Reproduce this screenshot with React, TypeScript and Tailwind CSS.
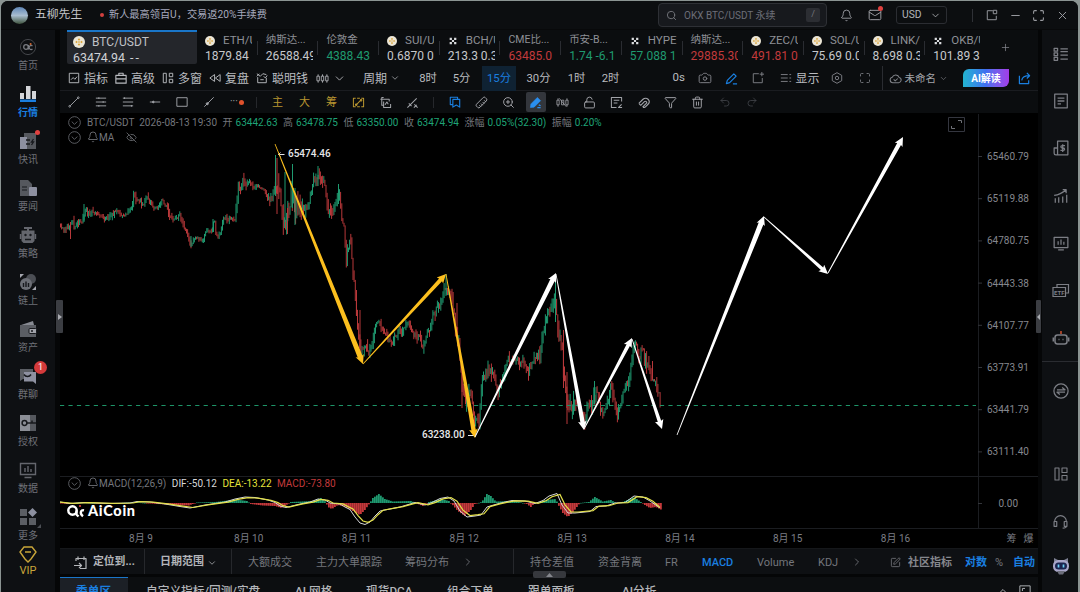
import type { ReactNode } from 'react';
import {
  Bell,
  Camera,
  ChevronDown,
  ChevronRight,
  ChevronUp,
  EyeOff,
  Filter,
  LockOpen,
  Mail,
  Maximize,
  Minus,
  Plus,
  Redo2,
  Ruler,
  Search,
  SquarePen,
  Trash2,
  Undo2,
  X,
  ZoomIn,
} from 'lucide-react';
import { clsx } from 'clsx';

const GREEN = '#1f9a70';
const RED = '#b8383a';

/* ---------- icon helper ---------- */

function Ico({ size = 13, w = 1.1, children, className }: { size?: number; w?: number; children: ReactNode; className?: string }) {
  return (
    <svg
      width={size}
      height={size}
      viewBox="0 0 14 14"
      fill="none"
      stroke="currentColor"
      strokeWidth={w}
      strokeLinejoin="round"
      className={clsx('shrink-0', className)}
    >
      {children}
    </svg>
  );
}

/* ---------- title bar ---------- */

function TitleBar() {
  return (
    <header className="flex h-[28px] shrink-0 items-center bg-[#0c0e10] pl-[10px] text-[#9a9ca1]">
      <div className="h-[17px] w-[17px] rounded-full bg-gradient-to-b from-[#5f86b5] via-[#a9bdd0] to-[#41553f]" />
      <span className="ml-[7px] w-[65px] text-[11.800px] text-[#c3c5c9]">五柳先生</span>
      <span className="h-[4px] w-[4px] rounded-full bg-[#d2403f]" />
      <span className="ml-[5px] w-[549px] text-[10.200px] text-[#a6a9bd]">新人最高领百U，交易返20%手续费</span>
      <div className="flex h-[24px] w-[169px] shrink-0 items-center rounded-[4px] border border-[#2e3035] bg-[#17191d] pl-[7px] pr-[6px]">
        <Search size={11} strokeWidth={2} className="text-[#77797f]" />
        <span className="ml-[7px] flex-1 pt-px text-[10px] text-[#6c6e78]">OKX BTC/USDT 永续</span>
        <span className="flex h-[14px] w-[14px] items-center justify-center rounded-[2px] bg-[#2c2e33] text-[9px] text-[#74767c]">/</span>
      </div>
      <Bell size={13} strokeWidth={1.7} className="ml-[13px] shrink-0" />
      <div className="relative ml-[15px] shrink-0">
        <Mail size={14} strokeWidth={1.7} />
        <span className="absolute -right-px -top-[2px] h-[5px] w-[5px] rounded-full bg-[#e0413f]" />
      </div>
      <div className="ml-[14px] flex h-[18px] w-[51px] shrink-0 items-center justify-between rounded-[3px] border border-[#2b2d32] px-[5px] text-[10.300px] text-[#b4b6ba]">
        USD
        <ChevronDown size={11} strokeWidth={1.8} />
      </div>
      <span className="ml-[25px] h-[13px] w-px bg-[#2f3136]" />
      <Ico size={12} className="ml-[13px]">
        <path d="M8 2H1.500v10.500H12V8M8.500 1.500h4v4h-4z" />
      </Ico>
      <Minus size={13} strokeWidth={1.8} className="ml-[11px]" />
      <Maximize size={13} strokeWidth={2} className="ml-[10px]" />
      <X size={13} strokeWidth={1.8} className="ml-[11px]" />
    </header>
  );
}

/* ---------- left navigation ---------- */

const navItems: { label: string; icon: ReactNode; dot?: boolean; badge?: string; active?: boolean; corner?: boolean }[] = [
  {
    label: '首页',
    icon: (
      <>
        <circle cx="9" cy="9" r="7.600" fill="none" stroke="#44464b" />
        <circle cx="7" cy="9" r="2.300" fill="none" stroke="#7a7c82" strokeWidth="1.300" />
        <path d="M9.500 7v4.500M13.500 8a2 2 0 1 0 0 3" fill="none" stroke="#7a7c82" strokeWidth="1.200" />
        <circle cx="11.600" cy="6" r="1" fill="#d2662f" />
      </>
    ),
  },
  {
    label: '行情',
    active: true,
    icon: (
      <>
        <path d="M1 8h4v6H1zM7 1h4.500v13H7zM13 6h4v8h-4z" fill="#d4d6da" />
        <path d="M1 14.500h16V17H1z" fill="#1a7fe0" />
      </>
    ),
  },
  {
    label: '快讯',
    dot: true,
    icon: (
      <>
        <path d="M5 1h12v16H5z" fill="#55585e" />
        <path d="M1 5h7v12H1z" fill="#8d90a0" />
        <path d="M7 8h4M7 12h4M14.500 7l-2 3h2l-2 3" stroke="#17191d" strokeWidth="1.300" fill="none" />
      </>
    ),
  },
  {
    label: '要闻',
    icon: (
      <>
        <path d="M1 1h8l4 4v12H1z" fill="#55585e" />
        <path d="M3 8h5M3 11h5" stroke="#17191d" strokeWidth="1.200" />
        <rect x="10" y="8" width="8" height="9" rx="1" fill="#8d90a0" />
      </>
    ),
  },
  {
    label: '策略',
    icon: (
      <>
        <path d="M5 1h8v2h-3v1.500h5.500v10.500l-2 2h-9l-2-2V4.500H8V3H5zM.8 8h1.400v5H.8zM15.800 8h1.400v5h-1.400z" fill="#64666d" />
        <circle cx="6.500" cy="9" r="1.200" fill="#17191d" />
        <circle cx="11.500" cy="9" r="1.200" fill="#17191d" />
        <path d="M6 13.500h6" stroke="#17191d" strokeWidth="1.300" />
      </>
    ),
  },
  {
    label: '链上',
    icon: (
      <>
        <circle cx="12" cy="6" r="5" fill="#4b4e54" />
        <circle cx="7" cy="11" r="6" fill="#6c6f76" />
        <path d="M1 1h4L1 5zM17 17h-4l4-4z" fill="#a4a6ae" />
        <path d="M4.500 10v4M7 8.500v5.500M9.500 10v4" stroke="#17191d" strokeWidth="1.400" />
      </>
    ),
  },
  {
    label: '资产',
    icon: (
      <>
        <path d="M2 5l12-4 1 4z" fill="#878a92" />
        <path d="M1 5h16v12H1z" fill="#5b5e64" />
        <rect x="10" y="8.500" width="7.500" height="5" rx="1" fill="#a1a3aa" stroke="#17191d" />
        <path d="M12 11h2" stroke="#17191d" strokeWidth="1.300" />
      </>
    ),
  },
  {
    label: '群聊',
    badge: '1',
    icon: (
      <>
        <path d="M1 2h13v10H4l-3 2z" fill="#5b5e64" />
        <path d="M5 5h12v12l-3-2.500H5z" fill="#8d90a0" />
        <path d="M5 7.500c1.500 2.500 5.500 2.500 7 0" stroke="#17191d" strokeWidth="1.500" fill="none" />
      </>
    ),
  },
  {
    label: '授权',
    icon: (
      <>
        <path d="M1 1h10v16H1z" fill="#8b8e96" />
        <path d="M11 1h6v16h-6z" fill="#55585e" />
        <circle cx="5.500" cy="9" r="2.400" fill="none" stroke="#17191d" strokeWidth="1.500" />
        <path d="M8 9h9M13 6.500V9" stroke="#17191d" strokeWidth="1.500" />
      </>
    ),
  },
  {
    label: '数据',
    icon: (
      <path d="M1.500 2.500h15v11h-15zM5.500 16.500h7M6 7v4M9 5v6M12 8v3" fill="none" stroke="#64666d" strokeWidth="1.400" />
    ),
  },
  {
    label: '更多',
    corner: true,
    icon: (
      <>
        <path d="M1 1h7v7H1zM1 10h7v7H1zM10 10h7v7h-7z" fill="#5b5e64" />
        <path d="M13.500 0l4.500 4.500L13.500 9 9 4.500z" fill="#8d90a0" />
      </>
    ),
  },
];

function LeftNav() {
  return (
    <nav className="flex w-[54px] shrink-0 flex-col items-center bg-[#0e1013] pt-[8px]">
      {navItems.map((item) => (
        <div key={item.label} className="flex h-[47px] shrink-0 flex-col items-center">
          <div className="relative">
            <svg width="18" height="18" viewBox="0 0 18 18">
              {item.icon}
            </svg>
            {item.dot && <span className="absolute -right-[3px] -top-[2px] h-[5px] w-[5px] rounded-full bg-[#e0413f]" />}
            {item.badge && (
              <span className="absolute -right-[10px] -top-[6px] flex h-[13px] w-[13px] items-center justify-center rounded-full bg-[#d43a3b] text-[9px] text-white">
                {item.badge}
              </span>
            )}
            {item.corner && (
              <svg width="4" height="4" viewBox="0 0 4 4" className="absolute -bottom-[2px] -right-[4px]">
                <path d="M4 0v4H0z" fill="#4b4e54" />
              </svg>
            )}
          </div>
          <span
            className={clsx(
              'mt-[2px] text-[10px] leading-[15px]',
              item.active ? 'font-bold text-[#1a7fe0]' : 'text-[#6f7178]',
            )}
          >
            {item.label}
          </span>
        </div>
      ))}
      <svg width="18" height="17" viewBox="0 0 18 17" fill="none" stroke="#c9a63a" strokeWidth="1.400" className="-mt-[9px] shrink-0">
        <path d="M5 1h8l4 5-5 7-3 3-3-3-5-7zM6 6h6" />
      </svg>
      <span className="text-[11px] leading-[16px] text-[#c9a63a]">VIP</span>
    </nav>
  );
}

/* ---------- quote tabs ---------- */

type Quote = { name: string; value: string; ex?: 'bn' | 'okx'; tone?: 'up' | 'down' };

const quotes: Quote[] = [
  { name: 'ETH/USDT', value: '1879.84', ex: 'bn' },
  { name: '纳斯达...', value: '26588.49' },
  { name: '伦敦金', value: '4388.43', tone: 'up' },
  { name: 'SUI/USDT', value: '0.6870 0.1', ex: 'bn' },
  { name: 'BCH/USDT', value: '213.3 0.33', ex: 'okx' },
  { name: 'CME比...', value: '63485.0', tone: 'down' },
  { name: '币安-B...', value: '1.74 -6.1', tone: 'up' },
  { name: 'HYPE', value: '57.088 1', ex: 'okx', tone: 'up' },
  { name: '纳斯达...', value: '29885.30', tone: 'down' },
  { name: 'ZEC/USDT', value: '491.81 0.2', ex: 'bn', tone: 'down' },
  { name: 'SOL/USDT', value: '75.69 0.05', ex: 'bn' },
  { name: 'LINK/USDT', value: '8.698 0.35', ex: 'bn' },
  { name: 'OKB/USDT', value: '101.89 3.1', ex: 'okx' },
];

function ExchangeLogo({ ex, size }: { ex: 'bn' | 'okx'; size: number }) {
  if (ex === 'bn') {
    return (
      <svg width={size} height={size} viewBox="0 0 12 12" className="shrink-0">
        <circle cx="6" cy="6" r="6" fill="#ece6d6" />
        <path d="M6 2.200l1.300 1.300L6 4.800 4.700 3.500zM6 7.200l1.300 1.300L6 9.800 4.700 8.500zM3.500 4.700L4.800 6 3.500 7.300 2.200 6zM8.500 4.700L9.800 6 8.500 7.300 7.200 6zM6 5l1 1-1 1-1-1z" fill="#dba43a" />
      </svg>
    );
  }
  return (
    <svg width={size} height={size} viewBox="0 0 12 12" className="shrink-0">
      <path d="M2 2h2.700v2.700H2zM7.300 2H10v2.700H7.300zM4.700 4.700h2.600v2.600H4.700zM2 7.300h2.700V10H2zM7.300 7.300H10V10H7.300z" fill="#d9dbde" />
    </svg>
  );
}

function QuoteTabs() {
  return (
    <div className="flex h-[35px] shrink-0 bg-[#0b0d0f] pl-[7px]">
      <div className="h-[34px] w-[130px] shrink-0 rounded-b-[2px] border-t-2 border-[#1a76c9] bg-[#24262b] pl-[6px]">
        <div className="flex h-[19px] items-center gap-[7px] text-[12px] text-[#c0c2c6]">
          <ExchangeLogo ex="bn" size={12} />
          BTC/USDT
        </div>
        <div className="flex gap-[5px] text-[12.400px] leading-[14px] text-[#d0d2d6]">
          63474.94<span className="tracking-[2px]">--</span>
        </div>
      </div>
      {quotes.map((q, i) => (
        <div key={i} className="flex w-[60.700px] shrink-0 items-center pt-px">
          <div className="w-[55px] shrink-0 overflow-hidden whitespace-nowrap pl-[8px]">
            <div className={clsx('flex h-[17px] items-center text-[#8e9096]', q.ex ? 'gap-[8px] pt-[3px] text-[11.500px]' : 'text-[10.500px]')}>
              {q.ex && <ExchangeLogo ex={q.ex} size={10} />}
              {q.name}
            </div>
            <div
              className={clsx(
                'text-[12px] leading-[17px]',
                q.tone === 'up' && 'text-[#1f9a70]',
                q.tone === 'down' && 'text-[#c23a3c]',
                !q.tone && 'text-[#c6c8cc]',
              )}
            >
              {q.value}
            </div>
          </div>
          {i < quotes.length - 1 && <span className="ml-auto h-[14px] w-px bg-[#2a2c31]" />}
        </div>
      ))}
      <Plus size={11} strokeWidth={1.6} className="ml-[14px] mt-[12px] text-[#85878d]" />
    </div>
  );
}

/* ---------- toolbars ---------- */

function Tool({ icon, label, className }: { icon: ReactNode; label: string; className?: string }) {
  return (
    <div className={clsx('flex shrink-0 items-center gap-[4px] whitespace-nowrap', className)}>
      {icon}
      <span className="pt-px">{label}</span>
    </div>
  );
}

function ChartToolbar() {
  return (
    <div className="flex h-[26px] shrink-0 items-center border-b border-[#1a1c20] bg-[#0b0d0f] pl-[8px] pt-px text-[12px] text-[#b9bbbf]">
      <Tool
        className="w-[47px]"
        label="指标"
        icon={<Ico size={12}><path d="M1.500 1.500h11v11h-11zM3.500 9l2.500-2.500L8 8.500l2.500-3" /></Ico>}
      />
      <Tool
        className="w-[47px]"
        label="高级"
        icon={<Ico size={12} w={1.3}><path d="M1 4h12v9H1zM4.500 4V1.500h5V4M1 8h12" /></Ico>}
      />
      <Tool
        className="w-[47px]"
        label="多窗"
        icon={<Ico size={12}><path d="M1.500 1.500h3.500v11H1.500zM8.500 1.500h4v4h-4zM8.500 8.500h4v4h-4z" /></Ico>}
      />
      <Tool
        className="w-[47px]"
        label="复盘"
        icon={<Ico size={12}><path d="M6.500 3v8L1 7zM13 3v8L7.500 7z" /></Ico>}
      />
      <Tool
        className="w-[60px]"
        label="聪明钱"
        icon={<Ico size={12}><path d="M1 2l4 3 3-3 4 1M2 6v6.500h10V7M5 9h4M1 5l3-3M9 5l2 2 2-3" /></Ico>}
      />
      <Ico size={13} w={0.9}>
        <path d="M1 4.500h2.600v5H1zM5.700 4.500h2.600v5H5.700zM10.400 4.500H13v5h-2.600z" />
        <path d="M2.300 2.500v2M2.300 9.500v2M7 2.500v2M7 9.500v2M11.700 2.500v2M11.700 9.500v2" />
      </Ico>
      <ChevronDown size={13} strokeWidth={1.6} className="ml-[4px]" />
      <div className="ml-[17px] flex w-[48px] items-center gap-[3px]">
        <span className="pt-px">周期</span>
        <ChevronDown size={10} strokeWidth={1.7} />
      </div>
      <div className="flex h-full items-center text-center text-[11.300px]">
        <span className="w-[34px] pt-[3px]">8时</span>
        <span className="mr-[4px] w-[33px] pt-[3px]">5分</span>
        <span className="flex h-[25px] w-[34px] items-center justify-center bg-[#0f2233] pt-[2px] text-[#1a7fe0]">15分</span>
        <span className="w-[45px] pt-[3px]">30分</span>
        <span className="w-[31px] pt-[3px]">1时</span>
        <span className="w-[37px] pt-[3px]">2时</span>
      </div>
      <div className="ml-auto flex h-full items-center text-[#7e8086]">
        <span className="w-[25px] text-[11.500px] text-[#b9bbbf]">0s</span>
        <Camera size={14} strokeWidth={1.7} className="mr-[13px]" />
        <Ico size={13} w={1.3} className="mr-[14px] text-[#1a7fe0]">
          <path d="M1.500 12.500l1-3.500 7-7 2.500 2.500-7 7zM8.500 12.800H13" />
        </Ico>
        <Ico size={12} className="mr-[16px]">
          <path d="M8 2H1.500v10.500H12V7M11.500 0v5M9 2.500h5" />
        </Ico>
        <Ico size={12} className="mr-[4px]">
          <path d="M1 3h8M1 7h8M1 11h8M11 3h2M11 7h2M11 11h2" />
        </Ico>
        <span className="w-[35px] pt-px text-[12px] text-[#b9bbbf]">显示</span>
        <Ico size={12} className="mr-[16px]">
          <path d="M7 .8l5.500 3.100v6.200L7 13.200l-5.500-3.100V3.900z" />
          <circle cx="7" cy="7" r="2" />
        </Ico>
        <Maximize size={12} strokeWidth={1.7} className="mr-[11px]" />
        <span className="h-full w-px bg-[#2a2c31]" />
        <Ico size={13} w={1.1} className="ml-[6px] mr-[3px]">
          <path d="M4 11.500a3 3 0 0 1-.5-5.900 4 4 0 0 1 7.500.4 2.800 2.800 0 0 1-.5 5.500zM5 8l1.700 1.600L9.500 7" />
        </Ico>
        <span className="pt-px text-[10.500px] text-[#a3a5aa]">未命名</span>
        <ChevronDown size={9} strokeWidth={1.7} className="ml-[3px] mr-[15px]" />
        <span className="flex h-[18px] w-[46px] items-center justify-center rounded-br-[6px] rounded-tl-[6px] bg-gradient-to-r from-[#22b3cf] via-[#3f6ef0] to-[#a23be8] text-[10px] font-bold text-white">
          AI解读
        </span>
        <Ico size={13} w={1.3} className="ml-[9px] mr-[7px] text-[#1a7fe0]">
          <path d="M1.500 4v8.500h10V9M4 9c.5-3.500 3-5 8.500-5M9.500 1l3 3-3 3" />
        </Ico>
      </div>
    </div>
  );
}

function Cell({ children, active }: { children: ReactNode; active?: boolean }) {
  return (
    <div className="flex w-[27px] shrink-0 items-center justify-center">
      <div className={clsx('flex h-[20px] w-[20px] items-center justify-center rounded-[2px]', active && 'bg-[#33363c] text-[#2a8ff0]')}>
        {children}
      </div>
    </div>
  );
}

function DrawToolbar() {
  return (
    <div className="flex h-[22px] shrink-0 items-center bg-[#0b0d0f] text-[11px] text-[#a2a4a9]">
      <Cell><Ico size={12}><path d="M2.500 11.500l9-9" /><circle cx="2" cy="12" r="1" /><circle cx="12" cy="2" r="1" /></Ico></Cell>
      <Cell><Ico size={12}><path d="M1 2.500h12M1 7h12M1 11.500h12M4.500 1.500v2M9.500 6v2M4.500 10.500v2" /></Ico></Cell>
      <Cell><Ico size={12}><path d="M1 2.500h12M1 7h12M1 11.500h12M3 1.500v2M11 10.500v2" /></Ico></Cell>
      <Cell><Ico size={12}><path d="M1 7h12" /><circle cx="5" cy="7" r="1" fill="currentColor" /></Ico></Cell>
      <Cell><Ico size={12}><path d="M1 2h12v10H1z" /></Ico></Cell>
      <Cell><Ico size={12}><path d="M1.500 12.500l11-11" /><circle cx="5" cy="9" r="1.200" fill="currentColor" /></Ico></Cell>
      <div className="flex w-[27px] items-center pl-[8px]">
        <span className="text-[10px] leading-[8px]">···</span>
        <span className="ml-px h-[5px] w-[5px] rounded-full bg-[#e0522c]" />
      </div>
      <span className="mx-[7px] h-[11px] w-px shrink-0 bg-[#26282c]" />
      <Cell><span className="pt-[2px] text-[#b8952f]">主</span></Cell>
      <Cell><span className="pt-[2px] text-[#b8952f]">大</span></Cell>
      <Cell><span className="pt-[2px] text-[#b8952f]">筹</span></Cell>
      <Cell>
        <Ico size={13} className="text-[#b8952f]">
          <path d="M4 2.500H1.500v9H4M10 11.500h2.500v-9H10M5.500 2.500h3M5.500 11.500h3M4.500 9.500l5-5" />
          <circle cx="4.500" cy="9.300" r=".8" />
          <circle cx="9.800" cy="4.500" r=".8" />
        </Ico>
      </Cell>
      <Cell><Ico size={13}><path d="M5 1.500H3V10h2M1.500 3.500H11V6M9.500 12.500H5V6M8 12.500h4.500V8.500M6.500 9.500l2-3 1.500 2.500" /></Ico></Cell>
      <Cell><Ico size={13}><path d="M1.500 12.500l10-10M3 8l3 3M8.500 12.500l3-3M9 9l3.500 3.500" /></Ico></Cell>
      <span className="mx-[7px] h-[11px] w-px shrink-0 bg-[#26282c]" />
      <Cell><Ico size={12} w={1.3} className="text-[#1a7fe0]"><path d="M4.500 4h8v9L8.500 10.500l-4 2.500zM4.500 10h-3V1.500H10V4" /></Ico></Cell>
      <Cell><Ruler size={13} strokeWidth={1.800} className="rotate-90" /></Cell>
      <Cell><ZoomIn size={13} strokeWidth={1.800} /></Cell>
      <Cell active>
        <Ico size={13} w={0.6}>
          <path d="M9 1.500L12.500 5 5.500 12 1.500 12.500 2 8.500z" fill="currentColor" />
          <path d="M9 12.500h3.500M10.500 9.500l2 1" strokeWidth="1.400" />
        </Ico>
      </Cell>
      <Cell><Ico size={13} w={0.9}><path d="M1 4.500h2.400v5H1zM6 4.500h2.400v5H6zM10.600 4.500H13v5h-2.400zM2.200 2.500v2M2.200 9.500v2M11.800 2.500v2M11.800 9.500v2M3.500 2.500l7.500 9" /></Ico></Cell>
      <Cell><LockOpen size={13} strokeWidth={1.800} /></Cell>
      <Cell><Ico size={13}><path d="M12.500 6V1.500h-11v11H7M4 4.500h6M4 7.500h4M9 12.500L12.500 9" /><path d="M9 12.500h4" /></Ico></Cell>
      <Cell><Ico size={13} w={1.2}><path d="M2 8l4.500-4.500a3.800 3.800 0 0 1 5.400 5.400L8.500 12.300M4 10l4-4a1.400 1.400 0 0 1 2 2l-4 4M2 8l2 2M6.500 12.300h2" /></Ico></Cell>
      <Cell><Filter size={13} strokeWidth={1.800} /></Cell>
      <Cell><Trash2 size={13} strokeWidth={1.800} /></Cell>
      <Cell><Undo2 size={12} strokeWidth={1.600} className="text-[#44464b]" /></Cell>
      <Cell><Redo2 size={12} strokeWidth={1.600} className="text-[#44464b]" /></Cell>
    </div>
  );
}

/* ---------- chart ---------- */

// x, mid y, half range of the bars around that point
const trend: [number, number, number][] = [
  [60, 224, 4], [64, 229, 3], [70, 226, 5], [75, 224, 4], [82, 223, 3], [85, 209, 6], [92, 212, 4], [98, 213, 3],
  [104, 218, 3], [110, 213, 4], [120, 213, 3], [124, 217, 3], [128, 212, 3], [132, 207, 4], [134, 194, 5], [138, 200, 4],
  [143, 204, 3], [148, 198, 4], [153, 208, 3], [158, 206, 3], [162, 203, 4], [167, 209, 5], [172, 219, 3], [180, 216, 3],
  [184, 228, 5], [188, 237, 6], [191, 244, 4], [196, 238, 2], [202, 241, 2], [207, 231, 3], [212, 233, 2], [214, 224, 8],
  [217, 238, 2], [220, 236, 3], [223, 217, 4], [230, 217, 3], [235, 220, 3], [238, 186, 7], [243, 184, 7], [250, 184, 4],
  [258, 187, 2], [264, 189, 1], [267, 202, 5], [272, 197, 4], [275, 187, 8], [278, 192, 14], [281, 210, 13], [284, 226, 8],
  [288, 220, 14], [292, 205, 16], [296, 210, 14], [300, 208, 12], [304, 210, 8], [308, 208, 8], [312, 188, 8], [318, 174, 8],
  [323, 180, 7], [328, 206, 7], [332, 214, 5], [336, 205, 6], [339, 194, 7], [342, 216, 6], [344, 228, 6], [346, 260, 7],
  [350, 236, 7], [353, 268, 8], [356, 308, 7], [359, 342, 8], [362, 345, 8], [366, 345, 7], [369, 352, 6], [374, 333, 7],
  [377, 318, 5], [382, 327, 6], [386, 338, 6], [392, 345, 6], [398, 336, 6], [404, 329, 5], [409, 319, 6], [414, 333, 5],
  [420, 342, 5], [424, 347, 6], [428, 330, 6], [434, 316, 6], [438, 304, 7], [443, 296, 6], [446, 282, 6], [450, 296, 6],
  [455, 318, 9], [459, 342, 9], [462, 385, 10], [467, 400, 10], [471, 392, 8], [475, 425, 8], [479, 424, 7], [482, 384, 8],
  [486, 372, 7], [490, 374, 8], [494, 377, 7], [500, 392, 6], [506, 364, 7], [510, 358, 8], [516, 362, 8], [522, 364, 8],
  [528, 376, 7], [534, 362, 7], [540, 355, 6], [543, 330, 8], [546, 318, 8], [552, 311, 8], [555, 290, 10], [558, 325, 9],
  [562, 352, 9], [566, 392, 11], [569, 410, 11], [574, 400, 10], [580, 408, 10], [584, 420, 6], [588, 412, 8], [592, 398, 8],
  [596, 394, 8], [600, 406, 8], [604, 415, 5], [608, 402, 8], [611, 388, 7], [614, 402, 7], [617, 412, 8], [620, 402, 8],
  [624, 388, 7], [629, 378, 7], [632, 358, 8], [636, 346, 7], [640, 356, 7], [644, 353, 7], [648, 366, 7], [652, 378, 7],
  [656, 380, 7], [659, 390, 9], [661, 416, 6],
];

// long single bars: x, top, bottom, up
const spikes: [number, number, number, boolean][] = [
  [70.500, 222, 239, false], [84, 204, 222, true], [275.500, 155, 196, true], [277, 158, 214, false],
  [285, 172, 222, true], [287.500, 208, 234, false], [292.500, 164, 208, true], [295, 188, 225, true], [318, 166, 186, true],
  [338.500, 184, 204, true], [356.500, 290, 316, false], [360, 310, 352, false], [446, 274, 296, true], [462, 372, 408, false],
  [457, 303, 330, false], [555.500, 280, 322, true], [563.500, 330, 388, false], [567, 372, 424, false], [594.500, 381, 404, true],
  [652.500, 361, 380, false], [213, 219, 232, true], [191, 236, 247, true],
];

const PITCH = 1.125;

function rand(i: number) {
  const v = Math.sin(i * 127.1 + 11.7) * 43758.5453;
  return v - Math.floor(v);
}

function sample(pts: number[][], x: number, k: number) {
  for (let i = 1; i < pts.length; i++) {
    if (x <= pts[i][0]) {
      const a = pts[i - 1];
      const b = pts[i];
      return a[k] + ((b[k] - a[k]) * (x - a[0])) / (b[0] - a[0]);
    }
  }
  return pts[pts.length - 1][k];
}

function buildCandles() {
  const out = { up: '', down: '' };
  let prev = trend[0][1];
  for (let i = 0; i < 534; i++) {
    const x = 60.5 + i * PITCH;
    const amp = sample(trend, x, 2);
    // short waves on top of the trend keep the line from looking smooth
    const wave = (rand(Math.floor(i / 3)) - 0.5) * amp * 1.3;
    const close = sample(trend, x, 1) + wave + (rand(i + 50) - 0.5) * amp * 0.9;
    const wick = rand(i + 900) ** 2 * amp * 1.1 + 0.4;
    const tail = rand(i + 1700) ** 2 * amp * 1.1 + 0.4;
    const top = Math.min(prev, close) - wick;
    const bottom = Math.max(prev, close) + tail;
    out[close < prev ? 'up' : 'down'] += `M${x.toFixed(1)} ${top.toFixed(1)}V${bottom.toFixed(1)}`;
    prev = close;
  }
  return out;
}

const candles = buildCandles();

type ArrowProps = { from: [number, number]; to: [number, number]; color: string };

// shaft that widens toward the head
function Arrow({ from, to, color }: ArrowProps) {
  const dx = to[0] - from[0];
  const dy = to[1] - from[1];
  const len = Math.hypot(dx, dy);
  const ux = dx / len;
  const uy = dy / len;
  const at = (along: number, side: number) =>
    `${(from[0] + ux * along - uy * side).toFixed(1)},${(from[1] + uy * along + ux * side).toFixed(1)}`;
  const neck = len - 8;
  const w = Math.min(2.5, 1.2 + len / 160);
  const points = [at(0, 0.4), at(neck, w), at(neck - 1, 4.4), at(len, 0), at(neck - 1, -4.4), at(neck, -w), at(0, -0.4)];
  return <polygon points={points.join(' ')} fill={color} />;
}

const arrows: ArrowProps[] = [
  { from: [275, 144], to: [363, 364], color: '#fcbf1e' },
  { from: [363, 364], to: [446, 274], color: '#fcbf1e' },
  { from: [446, 274], to: [475, 438], color: '#fcbf1e' },
  { from: [475, 437], to: [556, 273], color: '#fff' },
  { from: [556, 274], to: [584, 430], color: '#fff' },
  { from: [584, 429], to: [632, 338], color: '#fff' },
  { from: [632, 339], to: [662, 429], color: '#fff' },
  { from: [677, 435], to: [764, 216], color: '#fff' },
  { from: [764, 217], to: [828, 274], color: '#fff' },
  { from: [828, 273], to: [903, 137], color: '#fff' },
];

const dif: number[][] = [
  [60, 502], [70, 503.5], [85, 502.5], [110, 503.5], [130, 503], [137, 501.5], [150, 502], [165, 504], [180, 506.5], [190, 508],
  [205, 505], [225, 502], [235, 499], [245, 497], [255, 497.5], [268, 500], [275, 502.5], [280, 506], [286, 507.5], [292, 506], [300, 504],
  [310, 502], [318, 499], [325, 500], [330, 503], [340, 504], [345, 507], [350, 509.5], [355, 517], [360, 523], [365, 524.5],
  [370, 522], [375, 516], [380, 511], [390, 509], [400, 507], [410, 504], [415, 502.5], [425, 505], [432, 502.5], [440, 498.5],
  [448, 497], [454, 501], [460, 511], [467, 517], [475, 516], [481, 515], [487, 507], [497, 504], [505, 502], [512, 500.5],
  [525, 501], [535, 503.5], [543, 500.5], [549, 496], [557, 493.5], [562, 505], [568, 513], [575, 513], [590, 511.5], [596, 506.5],
  [606, 506], [615, 503], [625, 502.5], [634, 496], [643, 497], [650, 501], [660, 508],
];

// signed bar heights along x, positive goes up
const hist: number[][] = [
  [60, 0], [66, -1], [80, 0.6], [110, -0.6], [135, 1], [150, -0.6], [175, -2], [188, -2.5], [196, 0.5], [215, 1], [235, 3.5], [246, 2],
  [250, -1], [262, -2.5], [274, -3], [281, -5], [290, 1], [312, 2], [320, 5], [325, 1], [327, -4], [331, -6], [337, -2],
  [345, -4], [352, -8], [359, -12], [364, -7], [369, 0], [372, 5], [378, 9], [384, 4], [392, 1.5], [410, 2], [415, 0],
  [422, -3], [428, 1], [440, 4], [448, 2], [451, -1], [457, -8], [464, -13], [470, -7], [474, -1], [481, 1], [486, 9],
  [490, 7], [495, 1.5], [515, 2], [526, -1], [530, -4], [534, 0], [545, 3], [555, 4], [557, -1], [562, -10], [567, -14], [573, -8], [579, 0],
  [588, 1], [594, 6], [602, 1.5], [610, 3], [617, -1], [624, 2], [633, 6], [640, 1], [644, -2], [649, -5], [655, -4], [660, -6.5],
];

function toPath(pts: number[][], lag: number) {
  return pts
    .map((p, i) => `${i ? 'L' : 'M'}${Math.min(p[0] + (i ? lag : 0), 660)} ${(503 + (p[1] - 503) * (lag ? 0.9 : 1)).toFixed(1)}`)
    .join('');
}

const prices = ['65460.79', '65119.88', '64780.75', '64443.38', '64107.77', '63773.91', '63441.79', '63111.40'];
const dates = ['8月 9', '8月 10', '8月 11', '8月 12', '8月 13', '8月 14', '8月 15', '8月 16'];

function ChartCanvas() {
  const bars = [];
  for (let x = 60; x < 661; x += 2) {
    const h = sample(hist, x, 1);
    bars.push(
      <rect key={x} x={x} y={h > 0 ? 503 - h : 503} width={1.8} height={Math.max(Math.abs(h), 0.6)} fill={h > 0 ? GREEN : '#c5383b'} />,
    );
  }
  return (
    <svg width="978" height="415" viewBox="60 113 978 415" className="block">
      <g stroke="#1b1d21">
        <path d="M978.500 114V528M60 476.500H1038" fill="none" />
        {prices.map((p, i) => (
          <path key={p} d={`M978 ${156.5 + i * 42.2}h4`} stroke="#33353a" />
        ))}
        <path d="M978 503.500h4" stroke="#33353a" />
      </g>
      <g fill="#85878e" fontSize="10">
        {prices.map((p, i) => (
          <text key={p} x="987" y={160 + i * 42.2}>
            {p}
          </text>
        ))}
        <text x="998.500" y="506.500">
          0.00
        </text>
      </g>

      <g fill="none" strokeWidth="1">
        <path d={candles.up} stroke={GREEN} />
        <path d={candles.down} stroke={RED} />
        {spikes.map(([x, top, bottom, up]) => (
          <path key={x} d={`M${x} ${top}V${bottom}`} stroke={up ? GREEN : RED} />
        ))}
      </g>
      <path d="M60 405.500H976" stroke="#1d9468" strokeDasharray="4.200 4.250" fill="none" />

      <g fill="#e6e7e9" fontSize="10" fontWeight="500">
        <text x="288" y="157">
          65474.46
        </text>
        <text x="422" y="438">
          63238.00
        </text>
      </g>
      <path d="M284.500 154.500h-6M280.500 152.500l-2 2 2 2M468 435.500h6" stroke="#e6e7e9" fill="none" />
      {arrows.map((a, i) => (
        <Arrow key={i} {...a} />
      ))}

      {bars}
      <path d={toPath(dif, 0)} stroke="#d5d6d8" strokeWidth="1" fill="none" />
      <path d={toPath(dif, 3)} stroke="#e3e04a" strokeWidth="1.200" fill="none" />
    </svg>
  );
}

function CollapseIcon() {
  return (
    <Ico size={13} w={0.9} className="text-[#6a6c72]">
      <circle cx="7" cy="7" r="6.300" />
      <path d="M4 6l3 3 3-3" />
    </Ico>
  );
}

const ohlc = [
  ['开', '63442.63'],
  ['高', '63478.75'],
  ['低', '63350.00'],
  ['收', '63474.94'],
  ['涨幅', '0.05%(32.30)'],
  ['振幅', '0.20%'],
];

function ChartPanel() {
  return (
    <div className="relative h-[415px] shrink-0 bg-black">
      <ChartCanvas />
      <div className="absolute left-[8px] top-[1px] flex h-[16px] items-center text-[10px] text-[#74767c]">
        <CollapseIcon />
        <span className="ml-[6px] whitespace-pre">{'BTC/USDT  2026-08-13 19:30'}</span>
        {ohlc.map(([k, v]) => (
          <span key={k} className="ml-[5.500px] flex gap-[3px]">
            {k}
            <span className="text-[#1fa377]">{v}</span>
          </span>
        ))}
      </div>
      <div className="absolute left-[8px] top-[17px] flex h-[14px] items-center text-[10px] text-[#74767c]">
        <CollapseIcon />
        <Bell size={12} strokeWidth={1.700} className="ml-[6px]" />
        MA
        <EyeOff size={11} strokeWidth={1.700} className="ml-[12px]" />
      </div>
      <svg width="17" height="15" viewBox="0 0 17 15" fill="none" stroke="#34363f" className="absolute left-[888px] top-[4px]">
        <path d="M.5.500h16v14H.5z" />
        <path d="M10 3.500h3.500V6M3.500 9v2.500H7" stroke="#6f7177" />
      </svg>
      <div className="absolute left-[8px] top-[363px] flex h-[14px] items-center text-[10px] text-[#74767c]">
        <CollapseIcon />
        <Bell size={12} strokeWidth={1.700} className="ml-[6px]" />
        MACD(12,26,9)
        <span className="ml-[5.500px] text-[#d7d8da]">DIF:-50.12</span>
        <span className="ml-[5.500px] text-[#e6e43a]">DEA:-13.22</span>
        <span className="ml-[5.500px] text-[#c23a3c]">MACD:-73.80</span>
      </div>
      <div className="absolute left-[7px] top-[389px] flex h-[18px] items-center gap-[3px] text-white">
        <svg width="18" height="14" viewBox="0 0 18 14" fill="none" stroke="currentColor" strokeWidth="2.400">
          <circle cx="5.500" cy="6.500" r="4.200" />
          <path d="M9.500 6.500v4l2 2M17 6.300c-3.500-.8-4.500 3.500-1 6" />
          <circle cx="13" cy="2" r="1.100" fill="#e0413f" stroke="none" />
        </svg>
        <span className="font-[Lato] text-[14.500px] font-black tracking-[0.700px]">AiCoin</span>
      </div>
    </div>
  );
}

function DateAxis() {
  return (
    <div className="flex h-[20px] shrink-0 items-center border-t border-[#1b1d21] bg-black pl-[27px] text-[10px] text-[#7c7e85]">
      {dates.map((d) => (
        <span key={d} className="w-[107.800px] shrink-0 text-center">
          {d}
        </span>
      ))}
      <span className="flex gap-[7px] whitespace-nowrap pl-[57px]">
        <span>筹</span>
        <span>爆</span>
      </span>
    </div>
  );
}

/* ---------- bottom bars ---------- */

function IndicatorBar() {
  return (
    <div className="flex h-[26px] shrink-0 items-center whitespace-nowrap border-t border-[#15171a] bg-[#0e1013] text-[11px] text-[#74767c] [&>span]:pt-[3px]">
      <div className="flex h-full w-[85px] shrink-0 items-center border-r border-[#26282c] pl-[13px] pt-[2px] text-[10.800px] font-bold text-[#b4b6ba]">
        <Ico size={14} w={1.2} className="mr-[6px]">
          <path d="M3 5V2.500h10v10H7M5 .5v3.500M11 .5v3.500M1 9.500h7M6 7l2.500 2.500L6 12" />
        </Ico>
        定位到...
      </div>
      <div className="flex h-full w-[87px] shrink-0 items-center border-r border-[#26282c] pl-[15px] pt-[2px] font-bold text-[#b4b6ba]">
        日期范围
        <ChevronDown size={10} strokeWidth={1.800} className="ml-[3px]" />
      </div>
      <span className="ml-[16px] w-[68px]">大额成交</span>
      <span className="w-[89px]">主力大单跟踪</span>
      <span className="w-[57px]">筹码分布</span>
      <ChevronRight size={12} strokeWidth={1.700} className="mt-px" />
      <span className="ml-[39px] h-full w-px bg-[#26282c]" />
      <span className="ml-[16px] w-[68px]">持仓差值</span>
      <span className="w-[67px]">资金背离</span>
      <span className="w-[37px]">FR</span>
      <span className="w-[55px] font-medium text-[#1a7fe0]">MACD</span>
      <span className="w-[61px]">Volume</span>
      <span className="w-[33px]">KDJ</span>
      <ChevronRight size={12} strokeWidth={1.700} className="mt-px" />
      <SquarePen size={11} strokeWidth={1.800} className="ml-[27px] mt-px" />
      <span className="ml-[7px] w-[57px] font-bold text-[#85878d]">社区指标</span>
      <span className="w-[30px] font-bold text-[#1a7fe0]">对数</span>
      <span className="w-[18px]">%</span>
      <span className="font-bold text-[#1a7fe0]">自动</span>
    </div>
  );
}

function OrderTabs() {
  return (
    <div className="mt-[3px] flex h-[16px] shrink-0 overflow-hidden whitespace-nowrap bg-[#0c0e10] text-[11.700px] leading-[15px] text-[#b4b6ba]">
      <span className="h-full w-[68px] shrink-0 border-t border-[#1a76c9] bg-[#1c2026] pl-[16px] pt-[6px] font-bold text-[#1a7fe0]">委单区</span>
      <div className="flex flex-1 pl-[18px] pt-[7px] font-medium">
        <span className="w-[149px]">自定义指标/回测/实盘</span>
        <span className="w-[71px]">AI 网格</span>
        <span className="w-[81px]">现货DCA</span>
        <span className="w-[81px]">组合下单</span>
        <span className="w-[94px]">跟单面板</span>
        <span>AI分析</span>
      </div>
      <ChevronUp size={12} strokeWidth={1.800} className="mr-[10px] mt-[8px] shrink-0" />
      <Ico size={12} className="mr-[7px] mt-[8px]">
        <path d="M1 1h12v12H1zM4 7V4h3" />
      </Ico>
    </div>
  );
}

/* ---------- right rail ---------- */

function RailIcon({ children, className }: { children: ReactNode; className?: string }) {
  return (
    <div className={clsx('flex h-[47.400px] shrink-0 items-center justify-center pl-px', className)}>
      <Ico size={16} w={1.1}>{children}</Ico>
    </div>
  );
}

function RightRail() {
  return (
    <aside className="flex w-[36px] shrink-0 flex-col bg-[#0e1013] text-[#7c7e85]">
      <RailIcon><path d="M1 2h3v2.500H1zM1 6h3v2.500H1zM1 10h3v2.500H1zM6.500 2.500H13M6.500 5H13M6.500 8H13M6.500 11.500H13" /></RailIcon>
      <RailIcon><path d="M1.500 1h11v12h-11zM4 4.500h6M4 7h6M4 9.500h3" /></RailIcon>
      <RailIcon><path d="M4 1h9v12H2.500A1.500 1.500 0 0 1 1 11.500V7h3zM4 7v6M10.500 5H8c-1.500 0-1.500 2 0 2h1c1.500 0 1.500 2 0 2H6.500M8.500 3.800v6.600" /></RailIcon>
      <RailIcon><path d="M2 13V9M5 13V8M8.500 13V7.500M12 13V6M1 6.500c4-.5 7-2 10.500-5M8.500 1.500h3v3" /></RailIcon>
      <RailIcon><path d="M1 2h12v9H1zM4.500 13h5M4.500 8.500v-3M7 8.500V4M9.500 8.500V6" /></RailIcon>
      <div className="flex h-[47.400px] shrink-0 items-center justify-center pl-px">
        <svg width="18" height="15" viewBox="0 0 18 15" fill="none" stroke="currentColor" strokeWidth="1.200">
          <path d="M1 4.500h12.500v9H1zM5 4V1.500h11.500v8.500H14" />
          <text x="2" y="11.500" fontSize="6" fontWeight="700" fill="currentColor" stroke="none">ETF</text>
        </svg>
      </div>
      <div className="flex h-[47px] shrink-0 items-center justify-center pl-px">
        <svg width="18" height="16" viewBox="0 0 18 16" fill="none" stroke="currentColor" strokeWidth="1.500">
          <rect x="3" y="5" width="12" height="9" rx="2.500" />
          <path d="M1.300 7.500v4M16.700 7.500v4M6.500 9.500h1M10.500 9.500h1" />
          <path d="M9 1v3" stroke="#d2502f" />
        </svg>
      </div>
      <span className="h-px shrink-0 bg-[#2a2c31]" />
      <RailIcon className="mt-[5px]">
        <circle cx="7" cy="7" r="6.200" />
        <path d="M3.500 6h7L8 4M10.500 8h-7L6 10" />
      </RailIcon>
      <div className="mt-[36px] flex h-[47px] shrink-0 items-center justify-center pl-px">
        <Ico size={14}><path d="M1 1h4v12H1zM8 1h5v4.500H8zM8 8.500h5V13H8z" /></Ico>
      </div>
      <div className="flex h-[47px] shrink-0 items-center justify-center pl-px">
        <Ico size={15}><path d="M1 7h2.500v4.500H1zM10.500 7H13v4.500h-2.500zM1.500 7a5.500 5.500 0 0 1 11 0M12.500 11.500c0 1.200-1 1.700-3.500 1.700" /></Ico>
      </div>
      <div className="flex h-[42px] shrink-0 items-center justify-center pl-px">
        <svg width="18" height="18" viewBox="0 0 18 18">
          <path d="M2 1l4 2h6l4-2v7H2z" fill="#7d7f92" />
          <rect x="1" y="3" width="16" height="12" rx="5.500" fill="#a9a6c9" />
          <path d="M5 14h8l-2 3.500H7z" fill="#6d6f7c" />
          <rect x="3" y="5.500" width="12" height="7" rx="3.500" fill="#1c2550" />
          <path d="M6.500 7.500v3M11.500 7.500v3" stroke="#6fd0f5" strokeWidth="1.700" />
        </svg>
      </div>
    </aside>
  );
}

export default function App() {
  return (
    <div className="h-[592px] w-[1080px] overflow-hidden bg-[#8b9492] pl-[1px] pr-[2px] pt-[1px] font-[Roboto,'Noto_Sans_CJK_SC',sans-serif]">
      <div className="flex h-[591px] flex-col overflow-hidden rounded-t-[7px] bg-[#050607]">
        <TitleBar />
        <div className="relative flex min-h-0 flex-1 border-t border-[#08090a]">
          <LeftNav />
          <main className="ml-[5px] mr-[4px] flex w-[978px] shrink-0 flex-col">
            <QuoteTabs />
            <ChartToolbar />
            <DrawToolbar />
            <ChartPanel />
            <DateAxis />
            <IndicatorBar />
            <OrderTabs />
          </main>
          <RightRail />
          {/* panel handles */}
          <span className="absolute left-[55px] top-[270px] flex h-[33px] w-[7px] items-center justify-center rounded-[1px] bg-[#3b3d42]">
            <svg width="4" height="6" viewBox="0 0 4 6"><path d="M0 0l4 3-4 3z" fill="#a9abb0" /></svg>
          </span>
          <span className="absolute left-[1035px] top-[270px] flex h-[33px] w-[5px] items-center justify-center rounded-[1px] bg-[#3b3d42]">
            <svg width="3" height="6" viewBox="0 0 3 6"><path d="M3 0L0 3l3 3z" fill="#a9abb0" /></svg>
          </span>
          <span className="absolute left-[532px] top-[541px] flex h-[7px] w-[33px] items-center justify-center rounded-[2px] bg-[#36383d]">
            <svg width="7" height="4" viewBox="0 0 7 4"><path d="M0 4l3.500-4L7 4z" fill="#85878d" /></svg>
          </span>
        </div>
      </div>
    </div>
  );
}
